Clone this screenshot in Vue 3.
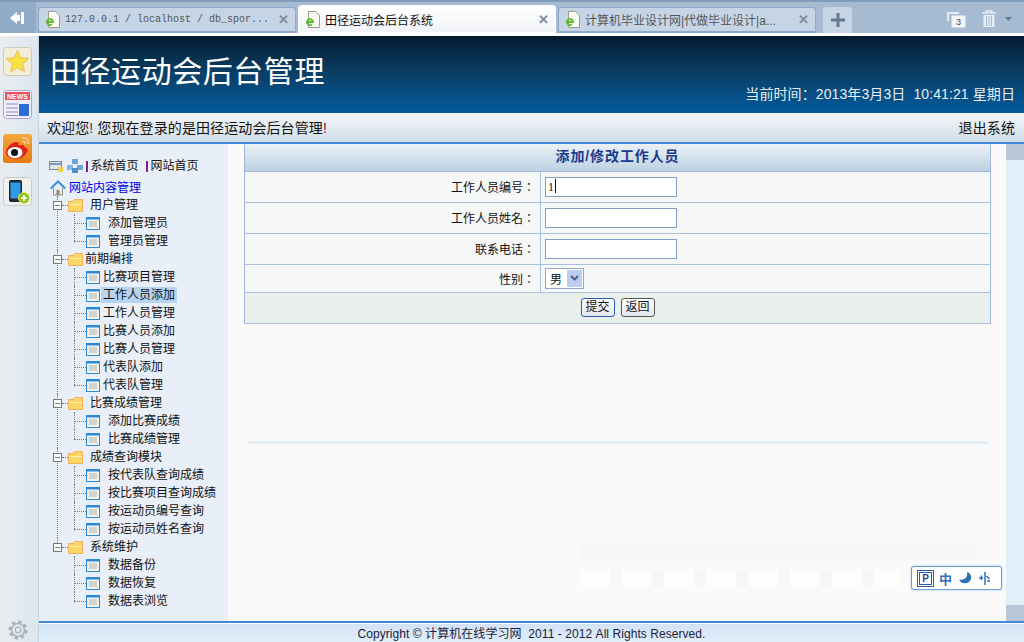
<script setup>
const tabs = [
  { title: "127.0.0.1 / localhost / db_spor...", mono: true },
  { title: "田径运动会后台系统", active: true },
  { title: "计算机毕业设计网|代做毕业设计|a..." },
];

const groups = [
  { name: "用户管理", items: ["添加管理员", "管理员管理"] },
  {
    name: "前期编排",
    tight: true,
    items: ["比赛项目管理", "工作人员添加", "工作人员管理", "比赛人员添加", "比赛人员管理", "代表队添加", "代表队管理"],
  },
  { name: "比赛成绩管理", items: ["添加比赛成绩", "比赛成绩管理"] },
  { name: "成绩查询模块", items: ["按代表队查询成绩", "按比赛项目查询成绩", "按运动员编号查询", "按运动员姓名查询"] },
  { name: "系统维护", items: ["数据备份", "数据恢复", "数据表浏览"] },
];

const fields = [
  { label: "工作人员编号：", value: "1", caret: true },
  { label: "工作人员姓名：", value: "" },
  { label: "联系电话：", value: "" },
];
</script>

<template>
  <div class="app">
    <div class="tabbar">
      <div class="back">
        <svg width="18" height="16" viewBox="0 0 18 16"><path d="M1 8 8 2v3h3v6H8v3z" fill="#fff" /><rect x="12" y="2" width="3" height="12" fill="#fff" /></svg>
      </div>
      <div v-for="t in tabs" :key="t.title" class="tab" :class="{ active: t.active }">
        <svg class="page-ico" width="15" height="17" viewBox="0 0 15 17">
          <path d="M2.5.5h7l4 4v12h-11z" fill="#fbfbf6" stroke="#9a9a88" />
          <path d="M1.5 11h5.500a3 3 0 1 0-1 2.300" fill="none" stroke="#5cb82c" stroke-width="1.800" />
        </svg>
        <span class="tab-title" :class="{ mono: t.mono }">{{ t.title }}</span>
        <span class="tab-x">✕</span>
      </div>
      <div class="plus">
        <svg width="14" height="14" viewBox="0 0 14 14"><path d="M5.500 0h3v5.500H14v3H8.500V14h-3V8.500H0v-3h5.500z" fill="#66788c" /></svg>
      </div>
      <div class="tools">
        <svg width="19" height="18" viewBox="0 0 19 18">
          <path d="M1 11V3h11" fill="none" stroke="#e4ebf3" stroke-width="2" />
          <rect x="4.500" y="5.500" width="14" height="12" rx="1" fill="#f2f5f8" />
          <text x="11.500" y="15" class="count">3</text>
        </svg>
        <svg class="trash" width="18" height="18" viewBox="0 0 18 18">
          <path d="M2 3h14M6 3V1h6v2" fill="none" stroke="#e6edf4" stroke-width="1.500" />
          <path d="M3.500 5h11v12h-11z" fill="#e6edf4" />
          <path d="M6.500 6v10M9 6v10M11.500 6v10" stroke="#a6bad2" />
        </svg>
        <svg width="7" height="4" viewBox="0 0 7 4"><path d="M0 0h7L3.500 4z" fill="#66788c" /></svg>
      </div>
    </div>

    <div class="body">
      <aside class="dock">
        <svg class="dock-ico" viewBox="0 0 29 29">
          <rect x=".5" y=".5" width="28" height="28" rx="3" fill="#f3eeda" stroke="#cfcabb" />
          <path d="M14.500 3.500l3.300 7.200 7.700.9-5.700 5.300 1.600 7.700-6.900-3.900-6.900 3.900 1.600-7.700-5.700-5.300 7.700-.9z" fill="#f8e044" stroke="#e3c25a" />
        </svg>
        <svg class="dock-ico" viewBox="0 0 29 29">
          <rect x=".5" y=".5" width="28" height="28" rx="3" fill="#f1effa" stroke="#aaa6cf" />
          <rect x="2" y="2" width="25" height="8" fill="#e8505c" />
          <text x="14.500" y="9" class="news">NEWS</text>
          <path d="M3 14h12M3 18h12M3 22h12M3 25.500h12" stroke="#8d84c4" />
          <rect x="16" y="14" width="10" height="12" fill="#2a6fd6" />
        </svg>
        <svg class="dock-ico" viewBox="0 0 29 29">
          <defs>
            <linearGradient id="wb" x1="0" y1="0" x2="0" y2="1"><stop offset="0" stop-color="#f3a73c" /><stop offset="1" stop-color="#e87a12" /></linearGradient>
          </defs>
          <rect width="29" height="29" rx="3" fill="url(#wb)" />
          <path d="M3 18c0-5 7-11 11-10 2 .5 2 2 1.500 3.500 3-1 6-1 6 1.500 3 1 4 3 2 6-2 4-7 6-12 5.500C6 24 3 22 3 18z" fill="#dc2418" />
          <ellipse cx="12" cy="18.500" rx="7.500" ry="5.500" fill="#fff" />
          <circle cx="11.500" cy="18.500" r="3.500" fill="#111" />
          <path d="M19 4c4-.5 7 2 6.500 6M19.500 7.500c2-.2 3 1 2.800 3" fill="none" stroke="#f6d9b0" stroke-width="1.300" />
        </svg>
        <svg class="dock-ico" viewBox="0 0 29 29">
          <rect x=".5" y=".5" width="28" height="28" rx="3" fill="#eef1ee" stroke="#c8ccc8" />
          <rect x="6" y="3" width="13" height="22" rx="2" fill="#23282e" />
          <rect x="7.500" y="5.500" width="10" height="16" fill="#2e9be8" />
          <circle cx="21" cy="21" r="5.500" fill="#8dc21f" stroke="#f3e36a" />
          <path d="M21 18v6M18 21h6" stroke="#fff" stroke-width="1.600" />
        </svg>
        <svg class="gear" width="20" height="20" viewBox="0 0 20 20">
          <circle cx="10" cy="10" r="6.500" fill="none" stroke="#a9b3bc" stroke-width="1.600" />
          <circle cx="10" cy="10" r="8.300" fill="none" stroke="#a9b3bc" stroke-width="2.500" stroke-dasharray="3.500 3" />
          <circle cx="10" cy="10" r="2.800" fill="none" stroke="#a9b3bc" stroke-width="1.300" />
        </svg>
      </aside>

      <div class="page">
        <header class="banner">
          <h1>田径运动会后台管理</h1>
          <div class="clock">当前时间：2013年3月3日&nbsp; 10:41:21 星期日</div>
        </header>
        <div class="welcome">
          <span>欢迎您<em>!</em> 您现在登录的是田径运动会后台管理<em>!</em></span>
          <span>退出系统</span>
        </div>

        <div class="mid">
          <nav class="tree">
            <div class="links">
              <svg width="15" height="14" viewBox="0 0 15 14">
                <rect x=".5" y="2.500" width="12" height="8" fill="#dfe6ee" stroke="#6f8aa6" />
                <rect x="1" y="4" width="11" height="2" fill="#7c97b5" />
                <path d="M9 8h5v5H9z" fill="#f0d050" />
              </svg>
              <svg width="16" height="14" viewBox="0 0 16 14">
                <rect x="5" y="0" width="6" height="5" fill="#6ca6d8" />
                <rect x="0" y="6" width="6" height="5" fill="#8db9e0" />
                <rect x="10" y="6" width="6" height="5" fill="#6ca6d8" />
                <rect x="5" y="9" width="6" height="5" fill="#4f8fc6" />
              </svg>
              <i class="pipe"></i><span>系统首页</span><i class="pipe second"></i><span>网站首页</span>
            </div>
            <div class="root">
              <svg width="16" height="16" viewBox="0 0 16 16">
                <path d="M3.500 8v7h9V8" fill="#e8ebee" stroke="#8a8f96" />
                <rect x="6.500" y="10" width="3" height="5" fill="#a08668" />
                <path d="M.8 8.500 8 1.500l7.200 7" fill="none" stroke="#3f8fd8" stroke-width="2" />
              </svg>
              <span>网站内容管理</span>
            </div>

            <div v-for="g in groups" :key="g.name" class="group">
              <div class="group-row">
                <span class="minus"></span>
                <span class="dash"></span>
                <svg width="15" height="13" viewBox="0 0 15 13">
                  <path d="M.5 2.500h5l1-2h8v12H.5z" fill="#fbd765" stroke="#f4b05a" />
                  <path d="M1 5.500h13" stroke="#fff2b8" />
                </svg>
                <span class="group-name" :class="{ tight: g.tight }">{{ g.name }}</span>
              </div>
              <div v-for="item in g.items" :key="item" class="child">
                <span class="conn"></span>
                <svg width="14" height="13" viewBox="0 0 14 13">
                  <rect x=".5" y=".5" width="13" height="12" fill="#f2f2ee" stroke="#2c8ad4" />
                  <rect x="1" y="1" width="12" height="1.500" fill="#2c8ad4" />
                  <path d="M3 5h8M3 7h8M3 9h8" stroke="#b4b4ae" />
                </svg>
                <span class="child-name" :class="{ tight: g.tight, current: item === '工作人员添加' }">{{ item }}</span>
              </div>
            </div>
          </nav>

          <main class="content">
            <table class="form">
              <colgroup>
                <col class="col-label" />
                <col />
              </colgroup>
              <thead>
                <tr class="head"><th colspan="2">添加/修改工作人员</th></tr>
              </thead>
              <tbody>
                <tr v-for="f in fields" :key="f.label">
                  <td class="label">{{ f.label }}</td>
                  <td class="val">
                    <div class="inp">{{ f.value }}<i v-if="f.caret" class="caret"></i></div>
                  </td>
                </tr>
                <tr class="short">
                  <td class="label">性别：</td>
                  <td class="val">
                    <div class="select">
                      <span>男</span>
                      <b><svg width="9" height="6" viewBox="0 0 9 6"><path d="M1 1l3.500 3.500L8 1" fill="none" stroke="#4d6185" stroke-width="2" /></svg></b>
                    </div>
                  </td>
                </tr>
                <tr class="actions">
                  <td colspan="2">
                    <button class="btn primary">提交</button>
                    <button class="btn">返回</button>
                  </td>
                </tr>
              </tbody>
            </table>
            <div class="rule"></div>
            <div class="ghost top"></div>
            <div class="ghost dots"></div>
            <div class="ime">
              <span class="ime-p">P</span>
              <span class="ime-zh">中</span>
              <svg width="14" height="14" viewBox="0 0 14 14"><path d="M9 1c1 5-2 8-8 8 2 4 10 5 12-1 1-3-1-6-4-7z" fill="#2f6fb4" /></svg>
              <svg width="12" height="13" viewBox="0 0 12 13"><path d="M7 0v13M1 6h4M3.500 3.500V8M9 9h3M8.500 4l3 3" stroke="#2f6fb4" stroke-width="1.500" fill="none" /></svg>
            </div>
          </main>

          <div class="scroll">
            <span class="scroll-btn"></span>
            <span class="scroll-btn"></span>
          </div>
        </div>

        <footer class="footer">Copyright © 计算机在线学习网&nbsp; 2011 - 2012 All Rights Reserved.</footer>
      </div>
    </div>
  </div>
</template>

<style>
html,
body {
  margin: 0;
  overflow: hidden;
}
</style>

<style scoped>
.app {
  width: 1024px;
  height: 642px;
  overflow: hidden;
  display: flex;
  flex-direction: column;
  background: #fff;
  font-family: "Liberation Sans", "Noto Sans CJK SC", sans-serif;
  font-size: 12px;
  color: #111;
}

.tabbar {
  height: 33px;
  box-sizing: border-box;
  margin-bottom: 3px;
  display: flex;
  align-items: flex-end;
  background: #a6bad2;
  border-top: 2px solid #7f9cbc;
}

.back {
  width: 36px;
  height: 31px;
  margin-right: 2px;
  display: flex;
  align-items: center;
  justify-content: center;
  background: #92abc7;
}

.tab {
  width: 258px;
  height: 26px;
  margin-right: 2px;
  padding: 0 6px 0 7px;
  box-sizing: border-box;
  display: flex;
  align-items: center;
  background: #c6d5e6;
  border: 1px solid #8ea8c6;
  border-bottom-width: 2px;
  border-radius: 4px 4px 0 0;
  color: #555;
}

.tab.active {
  height: 29px;
  margin-bottom: -1px;
  background: linear-gradient(#fff, #f0f3f7);
  border-color: #fff;
  color: #111;
}

.page-ico {
  flex: none;
  margin-right: 4px;
}

.tab-title {
  flex: 1;
  white-space: nowrap;
  overflow: hidden;
}

.tab-title.mono {
  font-family: "Liberation Mono", monospace;
  font-size: 10px;
}

.tab-x {
  font-size: 13px;
  font-weight: 700;
  color: #7c8b9c;
}

.plus {
  width: 29px;
  height: 26px;
  margin-left: 5px;
  display: flex;
  align-items: center;
  justify-content: center;
  background: #c6d5e6;
  border-radius: 3px 3px 0 0;
}

.tools {
  margin-left: auto;
  height: 29px;
  padding-right: 12px;
  display: flex;
  align-items: center;
}

.trash {
  margin: 0 7px 0 14px;
}

.count {
  font-size: 9px;
  fill: #445;
  text-anchor: middle;
}

.body {
  flex: 1;
  min-height: 0;
  display: flex;
}

.dock {
  width: 38px;
  padding-top: 11px;
  display: flex;
  flex-direction: column;
  gap: 14.4px;
  background: linear-gradient(90deg, #e9edf1, #dde6ee);
  border-right: 1px solid #c6d2de;
}

.dock-ico {
  width: 29px;
  height: 29px;
  margin-left: 3px;
}

.news {
  font-size: 7px;
  font-weight: 700;
  fill: #fff;
  text-anchor: middle;
}

.gear {
  margin: auto 0 2px 8px;
}

.page {
  flex: 1;
  min-width: 0;
  display: flex;
  flex-direction: column;
}

.banner {
  height: 77px;
  padding: 0 9px 11px 11px;
  box-sizing: border-box;
  display: flex;
  justify-content: space-between;
  background: linear-gradient(#021a2e, #0a3d63 45%, #045b9c);
  color: #fff;
}

.banner h1 {
  margin: 17px 0 0;
  font-size: 30px;
  line-height: 38px;
  font-weight: 400;
  letter-spacing: 0.55px;
}

.clock {
  align-self: flex-end;
  font-size: 14px;
  line-height: 16px;
  letter-spacing: 0.1px;
  color: #e8eef4;
  white-space: nowrap;
}

.welcome {
  height: 29px;
  padding: 0 9px 2px 8px;
  box-sizing: border-box;
  display: flex;
  align-items: center;
  justify-content: space-between;
  font-size: 14px;
  letter-spacing: 0.1px;
  background: linear-gradient(#f5f7fa, #cfdde7);
}

.welcome em {
  font-style: normal;
  color: #8a1030;
}

.mid {
  flex: 1;
  min-height: 0;
  display: flex;
  border-top: 2px solid #3f88da;
}

.tree {
  width: 189px;
  padding: 13px 0 0 14px;
  box-sizing: border-box;
  flex: none;
  background: #e8eff8;
  white-space: nowrap;
  line-height: 18px;
}

.links {
  height: 18px;
  margin-left: -4px;
  display: flex;
  align-items: center;
  gap: 3px;
}

.pipe {
  width: 1.5px;
  height: 11px;
  background: #8a1a96;
}

.pipe.second {
  margin-left: 4.5px;
}

.root {
  height: 17px;
  margin: 4px 0 0 -3px;
  display: flex;
  align-items: center;
  gap: 3px;
  color: #0000e6;
}

.group {
  position: relative;
}

.group::before {
  content: "";
  position: absolute;
  left: 4px;
  top: 0;
  bottom: 0;
  border-left: 1px dotted #777;
}

.group:last-child::before {
  bottom: auto;
  height: 5px;
}

.group-row,
.child {
  height: 18px;
  display: flex;
  align-items: center;
  position: relative;
}

.minus {
  width: 7px;
  height: 7px;
  border: 1px solid #777;
  background: linear-gradient(#777, #777) center / 5px 1px no-repeat #fff;
  position: relative;
  z-index: 1;
  flex: none;
}

.dash {
  width: 6px;
  border-top: 1px dotted #777;
}

.group-name {
  margin-left: 7px;
}

.group-name.tight {
  margin-left: 2px;
}

.child {
  padding-left: 21px;
}

.child::before {
  content: "";
  position: absolute;
  left: 21px;
  top: 0;
  bottom: 0;
  border-left: 1px dotted #777;
}

.child:last-child::before {
  bottom: 9px;
}

.conn {
  width: 12px;
  border-top: 1px dotted #777;
  flex: none;
}

.child-name {
  margin-left: 8px;
}

.child-name.tight {
  margin-left: 3px;
}

.child-name.current {
  margin-left: 1px;
  padding: 0 2px;
  line-height: 16px;
  background: #b6d4f0;
}

.content {
  flex: 1;
  min-width: 0;
  padding: 0 15px 0 16px;
  position: relative;
  background: #fafafa;
}

.form {
  width: 100%;
  table-layout: fixed;
  border-collapse: collapse;
  background: #f6f8f8;
  border: 1px solid #9db8dc;
  border-top: 0;
}

.col-label {
  width: 296px;
}

.form th {
  padding: 0 0 4px;
  font-size: 14px;
  letter-spacing: 0.9px;
  color: #1c3a8c;
  background: linear-gradient(#eaf1f5, #bdd0e2);
  border-bottom: 1px solid #9db8dc;
}

.form td {
  padding: 0;
  border-bottom: 1px solid #a9c0e0;
}

.form tr {
  height: 31px;
}

.form tr.head {
  height: 27px;
}

.form tr.short {
  height: 28px;
}

.label {
  padding-right: 5px !important;
  text-align: right;
  font-family: "Liberation Sans", "Noto Sans CJK TC", sans-serif;
  border-right: 1px solid #a9c0e0;
}

.val {
  padding-left: 4px !important;
}

.inp {
  width: 132px;
  height: 20px;
  box-sizing: border-box;
  padding: 0 2px;
  line-height: 18px;
  border: 1px solid #7fa0c8;
  background: #fff;
  font-family: "Liberation Serif", serif;
}

.caret {
  display: inline-block;
  width: 1px;
  height: 14px;
  margin-left: 1px;
  vertical-align: -2px;
  background: #111;
}

.select {
  width: 39px;
  height: 21px;
  box-sizing: border-box;
  display: flex;
  align-items: center;
  justify-content: space-between;
  padding: 0 1px 0 4px;
  border: 1px solid #8fa8cc;
  background: #fff;
}

.select b {
  width: 15px;
  height: 17px;
  display: flex;
  align-items: center;
  justify-content: center;
  background: #bccdf0;
}

.actions {
  background: #e9f0ec;
  text-align: center;
}

.btn {
  height: 19px;
  width: 34px;
  padding: 0;
  margin: 0 3px;
  font: 12px "Liberation Sans", "Noto Sans CJK SC", sans-serif;
  line-height: 15px;
  color: #111;
  background: linear-gradient(#fff, #e4e8ee);
  border: 1px solid #555;
  border-radius: 3px;
}

.btn.primary {
  border: 1.5px solid #2a5ba8;
}

.rule {
  height: 3px;
  margin: 117px 3px 0 4px;
  background: #e4eef6;
}

.ghost {
  position: absolute;
  left: 352px;
}

.ghost.top {
  top: 399px;
  width: 395px;
  height: 17px;
  background: #f6f6f6;
}

.ghost.dots {
  top: 426px;
  width: 320px;
  height: 16px;
  background: repeating-linear-gradient(90deg, #fdfdfd 0 30px, #f6f6f6 30px 42px);
}

.ime {
  position: absolute;
  right: 4px;
  top: 422px;
  width: 91px;
  height: 24px;
  box-sizing: border-box;
  padding: 0 7px;
  display: flex;
  align-items: center;
  gap: 6px;
  background: #fff;
  border: 1px solid #6f9ed6;
  box-shadow: 0 0 2px #8fb8e4;
  border-radius: 3px;
}

.ime-p {
  width: 11px;
  height: 11px;
  border: 1px solid #2f5f9e;
  outline: 1px solid #2f5f9e;
  outline-offset: 1px;
  margin-right: 1px;
  text-align: center;
  font: 700 10px/11px "Liberation Sans", sans-serif;
  color: #1f4a8c;
}

.ime-zh {
  font-size: 13px;
  font-weight: 700;
  color: #2f6fb4;
}

.scroll {
  width: 18px;
  flex: none;
  display: flex;
  flex-direction: column;
  justify-content: space-between;
  background: #e1eff8;
}

.scroll-btn {
  height: 16px;
  background: #b9c8d8;
}

.footer {
  height: 21px;
  box-sizing: border-box;
  text-align: center;
  line-height: 23px;
  letter-spacing: 0.06px;
  color: #221a3a;
  background: linear-gradient(#d2e1f5, #e1eff9);
  border-top: 2px solid #3f88da;
  box-shadow: inset 0 1px 0 #fff;
}
</style>
